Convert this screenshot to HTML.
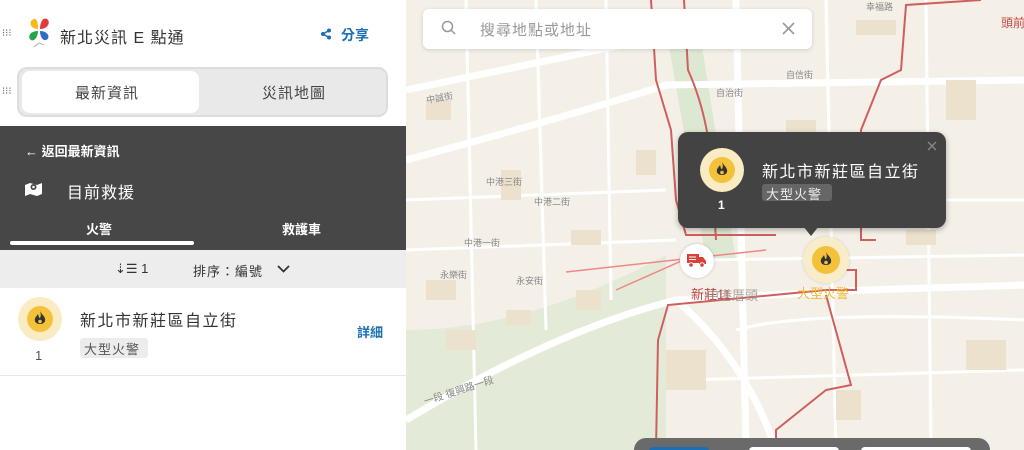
<!DOCTYPE html>
<html><head><meta charset="utf-8">
<style>
*{box-sizing:border-box;margin:0;padding:0}
body{width:1024px;height:450px;overflow:hidden;font-family:"Liberation Sans","Noto Sans CJK TC",sans-serif;background:#fff;position:relative}
.left{position:absolute;left:0;top:0;width:406px;height:450px;background:#fff}
.grip{position:absolute;left:2px;color:#666;font-size:10px;letter-spacing:0px}
.map{position:absolute;left:406px;top:0;width:618px;height:450px;background:#f4f0e8;overflow:hidden}
.t{position:absolute;white-space:nowrap}
</style></head><body>
<div class="left">
  <div class="grip" style="top:28px">⁝⁝⁝</div>
  <svg style="position:absolute;left:26px;top:17px" width="26" height="32" viewBox="0 0 26 32">
    <path d="M12 12 C4 12 2 4 8 2 C11 1 12 6 12 12Z" fill="#f5b918"/>
    <path d="M14 12 C14 5 17 0 21 2 C25 5 22 12 14 12Z" fill="#e23a3a"/>
    <path d="M12 14 C4 14 1 20 5 23 C8 25 12 20 12 14Z" fill="#2aa24a"/>
    <path d="M14 14 C22 14 25 21 20 23 C17 24 14 20 14 14Z" fill="#2d6ec8"/>
    <path d="M8 30 L13 26 L18 28" stroke="#bbb" fill="none" stroke-width="1.2"/>
  </svg>
  <div class="t" style="left:60px;top:24px;font-size:16px;color:#333;letter-spacing:1px">新北災訊 E 點通</div>
  <svg style="position:absolute;left:320px;top:28px" width="12" height="12" viewBox="0 0 12 12"><circle cx="9" cy="2.5" r="2" fill="#1b6fb5"/><circle cx="9" cy="9.5" r="2" fill="#1b6fb5"/><circle cx="3" cy="6" r="2" fill="#1b6fb5"/><path d="M3 6L9 2.5M3 6L9 9.5" stroke="#1b6fb5" stroke-width="1.5"/></svg>
  <div class="t" style="left:341px;top:25px;font-size:14px;color:#1b6fb5;font-weight:bold">分享</div>
  <div class="grip" style="top:86px">⁝⁝⁝</div>
  <div style="position:absolute;left:17px;top:67px;width:371px;height:50px;background:#e9e9e9;border-radius:10px;border:2px solid #ddd"></div>
  <div style="position:absolute;left:22px;top:71px;width:177px;height:42px;background:#fff;border-radius:8px"></div>
  <div class="t" style="left:75px;top:82px;font-size:15px;color:#444;letter-spacing:1px">最新資訊</div>
  <div class="t" style="left:262px;top:82px;font-size:15px;color:#444;letter-spacing:1px">災訊地圖</div>
  <div style="position:absolute;left:0;top:126px;width:406px;height:124px;background:#474747"></div>
  <div class="t" style="left:25px;top:141px;font-size:13px;color:#fff;font-weight:bold">← 返回最新資訊</div>
  <svg style="position:absolute;left:24px;top:181px" width="19" height="15" viewBox="0 0 19 15"><path d="M1 4L6 2L13 4L18 2V13L13 15L6 13L1 15Z" fill="#fff"/><circle cx="9.5" cy="6" r="3" fill="#474747"/><circle cx="9.5" cy="6" r="1.3" fill="#fff"/></svg>
  <div class="t" style="left:67px;top:179px;font-size:16px;color:#fff;letter-spacing:1px">目前救援</div>
  <div class="t" style="left:86px;top:219px;font-size:13px;color:#fff;font-weight:bold">火警</div>
  <div class="t" style="left:282px;top:219px;font-size:13px;color:#fff;font-weight:bold">救護車</div>
  <div style="position:absolute;left:10px;top:241px;width:184px;height:4px;background:#fff;border-radius:2px"></div>
  <div style="position:absolute;left:0;top:250px;width:406px;height:38px;background:#ededed"></div>
  <div class="t" style="left:115px;top:261px;font-size:13px;color:#333">⇣☰ 1</div>
  <div class="t" style="left:193px;top:261px;font-size:13px;color:#333;letter-spacing:1px">排序：編號</div>
  <svg style="position:absolute;left:277px;top:265px" width="13" height="8" viewBox="0 0 13 8"><path d="M1 1L6.5 6.5L12 1" stroke="#333" stroke-width="1.8" fill="none"/></svg>
  <div style="position:absolute;left:18px;top:297px;width:44px;height:44px;border-radius:50%;background:#fbebc3"></div>
  <div style="position:absolute;left:27px;top:306px;width:26px;height:26px;border-radius:50%;background:#f3c23a"></div>
  <svg style="position:absolute;left:34px;top:311px" width="12" height="15" viewBox="0 0 12 15"><path d="M6 0C8 4 12 6 11 10C10 14 2 14 1 10C0 7 3 5 4 3C5 6 5 7 6 7C7 5 7 3 6 0Z" fill="#333"/><circle cx="6" cy="10.5" r="1.8" fill="#f3c23a"/></svg>
  <div class="t" style="left:35px;top:348px;font-size:13px;color:#555">1</div>
  <div class="t" style="left:80px;top:307px;font-size:16px;color:#333;letter-spacing:1.5px">新北市新莊區自立街</div>
  <div style="position:absolute;left:80px;top:338px;width:68px;height:20px;background:#ececec;border-radius:3px"></div>
  <div class="t" style="left:84px;top:339px;font-size:13px;color:#555;letter-spacing:1px">大型火警</div>
  <div class="t" style="left:357px;top:322px;font-size:13px;color:#1b6fb5;font-weight:bold">詳細</div>
  <div style="position:absolute;left:0;top:375px;width:406px;height:1px;background:#e8e8e8"></div>
</div>

<div class="map">
  <svg width="618" height="450" style="position:absolute;left:0;top:0">
    <path d="M0 330 Q120 330 260 255 L260 450 L0 450Z" fill="#e3ebd8"/>
    <path d="M262 40 L295 40 L330 260 L300 260Z" fill="#dde8d2"/>
    <rect x="650" y="80" width="40" height="60" fill="#dde8d2"/>
    <g stroke="#fff" stroke-width="7" fill="none">
      <path d="M0 420 Q150 330 270 300 L460 290 L618 285"/>
      <path d="M270 300 Q340 360 370 450"/>
      <path d="M0 160 Q150 120 260 85 L618 80"/>
      <path d="M0 90 L240 40"/>
      <path d="M330 0 L340 450"/>
    </g>
    <g stroke="#fff" stroke-width="3" fill="none">
      <path d="M60 0 L70 450"/><path d="M130 0 L140 330"/><path d="M200 0 L205 300"/>
      <path d="M0 250 L270 240"/><path d="M0 200 L260 190"/><path d="M300 200 L618 200"/>
      <path d="M300 260 L618 255"/><path d="M420 0 L430 450"/><path d="M520 0 L525 450"/>
      <path d="M280 380 L618 370"/><path d="M330 330 Q400 310 618 320"/>
    </g>
    <g fill="#ece1cc">
      <rect x="20" y="100" width="25" height="20"/><rect x="95" y="170" width="20" height="30"/><rect x="165" y="230" width="30" height="15"/>
      <rect x="40" y="330" width="30" height="20"/><rect x="100" y="310" width="25" height="15"/><rect x="170" y="290" width="25" height="20"/>
      <rect x="260" y="350" width="40" height="40"/><rect x="430" y="390" width="25" height="30"/><rect x="540" y="80" width="30" height="40"/>
      <rect x="560" y="340" width="40" height="30"/><rect x="450" y="20" width="40" height="15"/><rect x="230" y="150" width="20" height="25"/>
      <rect x="500" y="230" width="30" height="15"/><rect x="380" y="120" width="30" height="15"/><rect x="20" y="280" width="30" height="20"/>
    </g>
    <g stroke="#cf5f5f" stroke-width="2" fill="none">
      <path d="M245 0 L250 80 L265 130 L270 200 L280 235 L370 235"/>
      <path d="M278 0 L282 70 Q300 110 305 160 L310 240"/>
      <path d="M575 0 L500 5 L495 70 L475 80 L455 130 L455 240 L470 240"/>
      <path d="M250 450 L252 340 L262 305 L420 290 L450 290 L450 270 L430 270"/>
      <path d="M420 295 L445 385 L420 390 L370 430 L370 450"/>
    </g>
    <g stroke="#e88" stroke-width="1.5" fill="none"><path d="M160 272 L360 250"/><path d="M210 290 L300 250"/></g>
  </svg>
  <div class="t" style="left:20px;top:91px;font-size:9px;color:#888;transform:rotate(-10deg)">中誠街</div>
  <div class="t" style="left:80px;top:175px;font-size:9px;color:#888">中港三街</div>
  <div class="t" style="left:128px;top:195px;font-size:9px;color:#888">中港二街</div>
  <div class="t" style="left:58px;top:236px;font-size:9px;color:#888">中港一街</div>
  <div class="t" style="left:34px;top:268px;font-size:9px;color:#888">永樂街</div>
  <div class="t" style="left:110px;top:274px;font-size:9px;color:#888">永安街</div>
  <div class="t" style="left:310px;top:86px;font-size:9px;color:#888">自治街</div>
  <div class="t" style="left:380px;top:68px;font-size:9px;color:#888">自信街</div>
  <div class="t" style="left:460px;top:0px;font-size:9px;color:#888">幸福路</div>
  <div class="t" style="left:16px;top:382px;font-size:10px;color:#888;transform:rotate(-18deg)">一段 復興路一段</div>
  <div class="t" style="left:595px;top:14px;font-size:12px;color:#c44">頭前</div>
  <div class="t" style="left:285px;top:284px;font-size:13px;color:#b44">新莊11</div>
  <div class="t" style="left:300px;top:285px;font-size:13px;color:#9a8e86;opacity:.8">中港厝頭</div>
  <div class="t" style="left:391px;top:283px;font-size:13px;color:#f0b830">大型火警</div>

  <div style="position:absolute;left:17px;top:9px;width:389px;height:40px;background:#fff;border-radius:6px;box-shadow:0 1px 4px rgba(0,0,0,.15)"></div>
  <svg style="position:absolute;left:35px;top:20px" width="16" height="16" viewBox="0 0 16 16"><circle cx="6.5" cy="6.5" r="5" stroke="#999" stroke-width="1.5" fill="none"/><path d="M10 10L14 14" stroke="#999" stroke-width="1.5"/></svg>
  <div class="t" style="left:74px;top:19px;font-size:15px;color:#999;letter-spacing:1px">搜尋地點或地址</div>
  <svg style="position:absolute;left:376px;top:22px" width="13" height="13" viewBox="0 0 13 13"><path d="M1 1L12 12M12 1L1 12" stroke="#999" stroke-width="1.6"/></svg>

  <div style="position:absolute;left:274px;top:244px;width:34px;height:34px;border-radius:50%;background:#fff;box-shadow:0 0 3px rgba(0,0,0,.2)"></div>
  <svg style="position:absolute;left:281px;top:253px" width="20" height="15" viewBox="0 0 20 15"><rect x="0" y="1" width="12" height="9" fill="#d9403a"/><path d="M12 4H16L19 8V11H12Z" fill="#d9403a"/><circle cx="4" cy="12" r="2.3" fill="#d9403a" stroke="#fff"/><circle cx="15" cy="12" r="2.3" fill="#d9403a" stroke="#fff"/><path d="M2 4H9M2 6.5H9" stroke="#fff" stroke-width="1"/></svg>

  <div style="position:absolute;left:397px;top:237px;width:46px;height:46px;border-radius:50%;background:#f9edc9;box-shadow:0 0 3px rgba(0,0,0,.15)"></div>
  <div style="position:absolute;left:406px;top:246px;width:28px;height:28px;border-radius:50%;background:#f3c23a"></div>
  <svg style="position:absolute;left:414px;top:252px" width="12" height="15" viewBox="0 0 12 15"><path d="M6 0C8 4 12 6 11 10C10 14 2 14 1 10C0 7 3 5 4 3C5 6 5 7 6 7C7 5 7 3 6 0Z" fill="#333"/><circle cx="6" cy="10.5" r="1.8" fill="#f3c23a"/></svg>

  <div style="position:absolute;left:272px;top:132px;width:268px;height:96px;background:#434343;border-radius:10px;box-shadow:0 2px 6px rgba(0,0,0,.3)"></div>
  <div style="position:absolute;left:397px;top:226px;width:0;height:0;border-left:8px solid transparent;border-right:8px solid transparent;border-top:10px solid #434343"></div>
  <svg style="position:absolute;left:521px;top:141px" width="10" height="10" viewBox="0 0 10 10"><path d="M1 1L9 9M9 1L1 9" stroke="#888" stroke-width="1.3"/></svg>
  <div style="position:absolute;left:294px;top:148px;width:44px;height:44px;border-radius:50%;background:#fbebc3"></div>
  <div style="position:absolute;left:303px;top:157px;width:26px;height:26px;border-radius:50%;background:#f3c23a"></div>
  <svg style="position:absolute;left:310px;top:162px" width="12" height="15" viewBox="0 0 12 15"><path d="M6 0C8 4 12 6 11 10C10 14 2 14 1 10C0 7 3 5 4 3C5 6 5 7 6 7C7 5 7 3 6 0Z" fill="#333"/><circle cx="6" cy="10.5" r="1.8" fill="#f3c23a"/></svg>
  <div class="t" style="left:312px;top:198px;font-size:12px;color:#fff;font-weight:bold">1</div>
  <div class="t" style="left:356px;top:158px;font-size:16px;color:#fff;letter-spacing:1.5px">新北市新莊區自立街</div>
  <div style="position:absolute;left:356px;top:184px;width:70px;height:17px;background:#666;border-radius:3px"></div>
  <div class="t" style="left:360px;top:184px;font-size:13px;color:#eee;letter-spacing:1px">大型火警</div>

  <div style="position:absolute;left:228px;top:438px;width:356px;height:30px;background:#6a6a6a;border-radius:12px"></div>
  <div style="position:absolute;left:243px;top:447px;width:60px;height:10px;background:#1b6fb5;border-radius:4px"></div>
  <div style="position:absolute;left:343px;top:447px;width:90px;height:10px;background:#fff;border-radius:4px"></div>
  <div style="position:absolute;left:455px;top:447px;width:110px;height:10px;background:#fff;border-radius:4px"></div>
</div>
</body></html>
